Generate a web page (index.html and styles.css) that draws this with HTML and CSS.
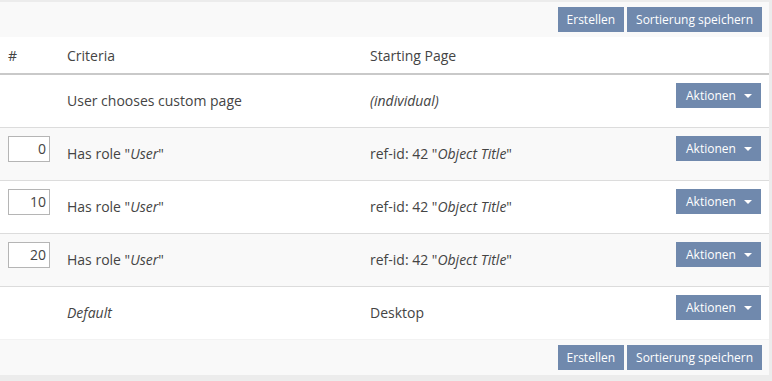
FILE: index.html
```html
<!DOCTYPE html>
<html>
<head>
<meta charset="utf-8">
<link rel="stylesheet" href="styles.css">
</head>
<body>
<div class="panel">
  <div class="toolbar">
    <button class="btn">Erstellen</button>
    <button class="btn">Sortierung speichern</button>
  </div>
  <table class="grid">
    <thead>
      <tr><th class="c-num">#</th><th class="c-crit">Criteria</th><th class="c-page">Starting Page</th><th class="c-act"></th></tr>
    </thead>
    <tbody>
      <tr>
        <td class="c-num"></td>
        <td>User chooses custom page</td>
        <td><em>(individual)</em></td>
        <td class="c-act"><button class="btn drop">Aktionen <span class="caret"></span></button></td>
      </tr>
      <tr class="alt">
        <td class="c-num"><input class="order" type="text" value="0"></td>
        <td>Has role "<em>User</em>"</td>
        <td>ref-id: 42 "<em>Object Title</em>"</td>
        <td class="c-act"><button class="btn drop">Aktionen <span class="caret"></span></button></td>
      </tr>
      <tr>
        <td class="c-num"><input class="order" type="text" value="10"></td>
        <td>Has role "<em>User</em>"</td>
        <td>ref-id: 42 "<em>Object Title</em>"</td>
        <td class="c-act"><button class="btn drop">Aktionen <span class="caret"></span></button></td>
      </tr>
      <tr class="alt">
        <td class="c-num"><input class="order" type="text" value="20"></td>
        <td>Has role "<em>User</em>"</td>
        <td>ref-id: 42 "<em>Object Title</em>"</td>
        <td class="c-act"><button class="btn drop">Aktionen <span class="caret"></span></button></td>
      </tr>
      <tr>
        <td class="c-num"></td>
        <td><em>Default</em></td>
        <td>Desktop</td>
        <td class="c-act"><button class="btn drop">Aktionen <span class="caret"></span></button></td>
      </tr>
    </tbody>
  </table>
  <div class="toolbar">
    <button class="btn">Erstellen</button>
    <button class="btn">Sortierung speichern</button>
  </div>
</div>
</body>
</html>
```

FILE: styles.css
```css
html, body {
  margin: 0;
  padding: 0;
  background: #ececec;
}
body {
  padding: 2px 3px 0 0;
  font-family: "Open Sans", "DejaVu Sans", sans-serif;
  font-size: 14px;
  color: #444;
}
.panel {
  background: #fff;
}
.toolbar {
  background: #f9f9f9;
  height: 35px;
  box-sizing: border-box;
  padding: 5px 7px 0 0;
  display: flex;
  justify-content: flex-end;
  gap: 3px;
}
.btn {
  font-family: "Open Sans", "DejaVu Sans", sans-serif;
  font-size: 12px;
  color: #fff;
  background: #7089ad;
  border: none;
  height: 25px;
  padding: 0 9px;
  margin: 0;
  line-height: 25px;
  cursor: pointer;
}
.grid {
  width: 100%;
  border-collapse: collapse;
}
.grid th {
  font-weight: normal;
  text-align: left;
  height: 36px;
  padding: 0 8px;
  border-bottom: 2px solid #c9c9c9;
  vertical-align: middle;
}
.grid td {
  height: 53px;
  padding: 0 8px;
  border-bottom: 1px solid #dcdcdc;
  vertical-align: middle;
  box-sizing: border-box;
}
.grid td.c-num,
.grid td.c-act {
  vertical-align: top;
  padding-top: 8px;
}
.grid tbody tr:last-child td {
  border-bottom-color: #f2f2f2;
}
.grid tr.alt td {
  background: #f9f9f9;
}
.c-num { width: 43px; }
.c-crit { width: 287px; }
.grid .c-act {
  text-align: right;
  padding-right: 8px;
}
.drop {
  width: 85px;
  padding: 0 0 0 10px;
  text-align: left;
  position: relative;
}
.caret {
  position: absolute;
  right: 9px;
  top: 11px;
  width: 0;
  height: 0;
  border-left: 4px solid transparent;
  border-right: 4px solid transparent;
  border-top: 4px solid #fff;
}
.order {
  width: 42px;
  height: 26px;
  box-sizing: border-box;
  border: 1px solid #b5b5b5;
  font-family: "Open Sans", "DejaVu Sans", sans-serif;
  font-size: 14px;
  color: #444;
  text-align: right;
  padding: 0 3px;
  margin: 0;
  display: block;
}
```
